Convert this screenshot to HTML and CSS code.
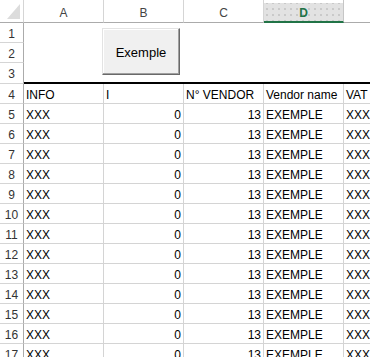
FILE: index.html
```html
<!DOCTYPE html>
<html>
<head>
<meta charset="utf-8">
<link rel="stylesheet" href="styles.css">
</head>
<body>
<div class="sheet">
  <div class="corner"><svg class="tri" width="24" height="23" viewBox="0 0 24 23"><polygon points="20,4 20,19 7,19" fill="#dcdcdc"/></svg></div>
  <div class="colh">A</div>
  <div class="colh">B</div>
  <div class="colh">C</div>
  <div class="colh sel">D</div>
  <div class="colh"></div>

  <div class="rowh">1</div>
  <div class="banner"><button class="btn">Exemple</button></div>
  <div class="rowh">2</div>
  <div class="rowh">3</div>

  <div class="rowh">4</div><div class="cell">INFO</div><div class="cell">I</div><div class="cell">N° VENDOR</div><div class="cell">Vendor name</div><div class="cell">VAT</div>
  <div class="rowh">5</div><div class="cell">XXX</div><div class="cell num">0</div><div class="cell num">13</div><div class="cell">EXEMPLE</div><div class="cell">XXX</div>
  <div class="rowh">6</div><div class="cell">XXX</div><div class="cell num">0</div><div class="cell num">13</div><div class="cell">EXEMPLE</div><div class="cell">XXX</div>
  <div class="rowh">7</div><div class="cell">XXX</div><div class="cell num">0</div><div class="cell num">13</div><div class="cell">EXEMPLE</div><div class="cell">XXX</div>
  <div class="rowh">8</div><div class="cell">XXX</div><div class="cell num">0</div><div class="cell num">13</div><div class="cell">EXEMPLE</div><div class="cell">XXX</div>
  <div class="rowh">9</div><div class="cell">XXX</div><div class="cell num">0</div><div class="cell num">13</div><div class="cell">EXEMPLE</div><div class="cell">XXX</div>
  <div class="rowh">10</div><div class="cell">XXX</div><div class="cell num">0</div><div class="cell num">13</div><div class="cell">EXEMPLE</div><div class="cell">XXX</div>
  <div class="rowh">11</div><div class="cell">XXX</div><div class="cell num">0</div><div class="cell num">13</div><div class="cell">EXEMPLE</div><div class="cell">XXX</div>
  <div class="rowh">12</div><div class="cell">XXX</div><div class="cell num">0</div><div class="cell num">13</div><div class="cell">EXEMPLE</div><div class="cell">XXX</div>
  <div class="rowh">13</div><div class="cell">XXX</div><div class="cell num">0</div><div class="cell num">13</div><div class="cell">EXEMPLE</div><div class="cell">XXX</div>
  <div class="rowh">14</div><div class="cell">XXX</div><div class="cell num">0</div><div class="cell num">13</div><div class="cell">EXEMPLE</div><div class="cell">XXX</div>
  <div class="rowh">15</div><div class="cell">XXX</div><div class="cell num">0</div><div class="cell num">13</div><div class="cell">EXEMPLE</div><div class="cell">XXX</div>
  <div class="rowh">16</div><div class="cell">XXX</div><div class="cell num">0</div><div class="cell num">13</div><div class="cell">EXEMPLE</div><div class="cell">XXX</div>
  <div class="rowh">17</div><div class="cell">XXX</div><div class="cell num">0</div><div class="cell num">13</div><div class="cell">EXEMPLE</div><div class="cell">XXX</div>
</div>
</body>
</html>
```
FILE: styles.css
```css
* {
  box-sizing: border-box;
  margin: 0;
  padding: 0;
}

html,
body {
  width: 370px;
  height: 357px;
  overflow: hidden;
  background: #ffffff;
}

body {
  font-family: "Liberation Sans", Arial, sans-serif;
  font-size: 12px;
  color: #000000;
}

.sheet {
  display: grid;
  grid-template-columns: 24px repeat(5, 80px);
  grid-template-rows: 23px 20px 20px 21px repeat(14, 20px);
  width: 424px;
}

.corner {
  border-right: 1px solid #d5d5d5;
  border-bottom: 1px solid #ababab;
}

.tri {
  display: block;
}

.colh {
  border-right: 1px solid #d5d5d5;
  border-bottom: 1px solid #ababab;
  text-align: center;
  color: #444444;
  padding-top: 6px;
  line-height: 14px;
}

.colh.sel {
  color: #217346;
  font-weight: bold;
  border-bottom: 2px solid #217346;
  border-right-color: #c6c6c6;
  background:
    linear-gradient(#ffffff, #ffffff) top / 100% 3px no-repeat,
    radial-gradient(circle, #c9c9c9 0.7px, transparent 1px) 0 0 / 6px 6px,
    #e2e2e2;
}

.rowh {
  border-right: 1px solid #ababab;
  border-bottom: 1px solid #d5d5d5;
  text-align: center;
  color: #333333;
  padding-top: 4px;
  line-height: 14px;
}

.banner {
  grid-column: 2 / -1;
  grid-row: 2 / 5;
  border-bottom: 2px solid #000000;
  padding: 5px 0 0 78px;
}

.btn {
  display: flex;
  align-items: center;
  justify-content: center;
  width: 78px;
  height: 47px;
  background: #f0f0f0;
  border: 1px solid;
  border-color: #e3e3e3 #696969 #696969 #e3e3e3;
  box-shadow: inset -1px -1px 0 #a0a0a0, inset 1px 1px 0 #ffffff;
  font-family: "Liberation Sans", Arial, sans-serif;
  font-size: 13px;
  color: #000000;
  padding-top: 2px;
}

.cell {
  border-right: 1px solid #d4d4d4;
  border-bottom: 1px solid #d4d4d4;
  padding: 4px 2px 0 2px;
  line-height: 14px;
  white-space: nowrap;
  overflow: hidden;
}

.num {
  text-align: right;
}
```
